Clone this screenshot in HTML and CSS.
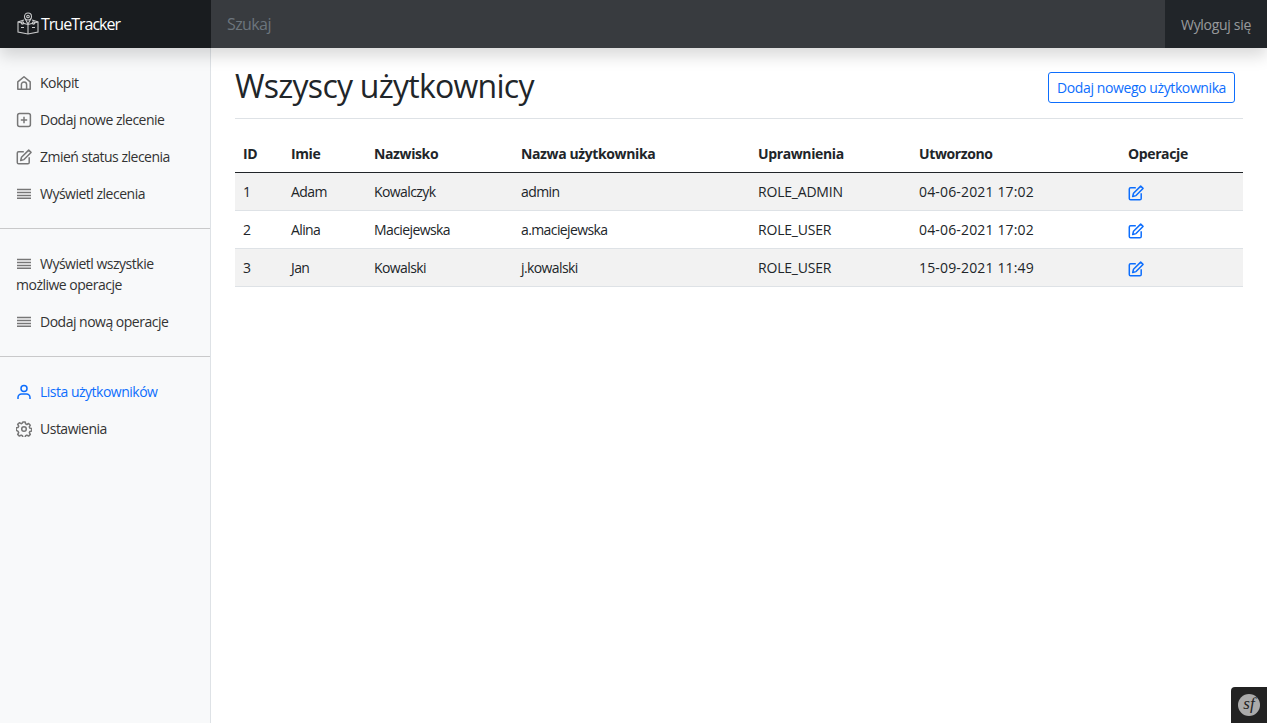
FILE: index.html
```html
<!DOCTYPE html>
<html lang="pl">
<head>
<meta charset="UTF-8">
<title>Wszyscy użytkownicy</title>
<link rel="stylesheet" href="styles.css">
</head>
<body>
<svg class="icon-defs" width="0" height="0">
    <defs>
        <symbol id="i-home" viewBox="0 0 16 16"><path d="M1.800 14.300V6.900L8 1.700l6.200 5.200v7.400z" stroke-linejoin="round"/><path d="M5.400 14.300V9.600a2.600 2.600 0 0 1 5.200 0v4.700"/></symbol>
        <symbol id="i-plus" viewBox="0 0 16 16"><rect x="1.600" y="1.600" width="12.800" height="12.800" rx="2"/><path d="M8 4.800v6.400M4.800 8h6.400"/></symbol>
        <symbol id="i-edit" viewBox="0 0 16 16"><path d="M7.800 2.800H2.600A1.300 1.300 0 0 0 1.300 4.100v9.300a1.300 1.300 0 0 0 1.300 1.300h9.300a1.300 1.300 0 0 0 1.300-1.300V8.200"/><path d="M12.700 1.100 15 3.400 8 10.600l-3.300.9.800-3.300z" stroke-linejoin="round"/></symbol>
        <symbol id="i-list" viewBox="0 0 16 16"><path d="M1 3.600h14M1 6.500h14M1 9.400h14M1 12.300h14"/></symbol>
        <symbol id="i-user" viewBox="0 0 16 16"><circle cx="8" cy="4.400" r="3"/><path d="M2 15v-1.400a3.500 3.500 0 0 1 3.500-3.500h5a3.500 3.500 0 0 1 3.500 3.500V15"/></symbol>
        <symbol id="i-gear" viewBox="0 0 16 16"><circle cx="8" cy="8" r="2.300"/><path d="M6.800 1h2.400l.4 1.900 1.300.6 1.700-1 1.700 1.700-1 1.700.6 1.300 1.900.4v2.400l-1.900.4-.6 1.300 1 1.700-1.700 1.700-1.700-1-1.300.6-.4 1.900H6.800l-.4-1.900-1.300-.6-1.700 1-1.700-1.700 1-1.700-.6-1.300L.2 9.200V6.800l1.900-.4.600-1.300-1-1.700 1.700-1.700 1.700 1 1.300-.6z" stroke-linejoin="round"/></symbol>
    </defs>
</svg>

<header class="navbar">
    <a class="brand" href="#">
        <svg class="brand-logo" viewBox="0 0 23 24">
            <circle cx="11" cy="4.500" r="3.500"/>
            <circle cx="11" cy="4.500" r="1.300"/>
            <path d="M8 6.500 11 12l3-5.500"/>
            <path d="M7 8 1 10v10l10 2 10-2V10l-6-2"/>
            <path d="M11 12.500V22M1 10l10 2.500L21 10"/>
            <circle cx="5.500" cy="11" r="1.200"/>
            <circle cx="16.500" cy="11" r="1.200"/>
            <path d="M4 15.500h3M15 15.500h3"/>
        </svg>
        <span>TrueTracker</span>
    </a>
    <input class="search" type="text" placeholder="Szukaj">
    <a class="logout" href="#">Wyloguj się</a>
</header>

<div class="layout">
    <nav class="sidebar">
        <ul class="side-list">
            <li><a href="#"><svg class="ico"><use href="#i-home"/></svg>Kokpit</a></li>
            <li><a href="#"><svg class="ico"><use href="#i-plus"/></svg>Dodaj nowe zlecenie</a></li>
            <li><a href="#"><svg class="ico"><use href="#i-edit"/></svg>Zmień status zlecenia</a></li>
            <li><a href="#"><svg class="ico"><use href="#i-list"/></svg>Wyświetl zlecenia</a></li>
        </ul>
        <hr class="side-rule">
        <ul class="side-list">
            <li><a href="#"><svg class="ico"><use href="#i-list"/></svg>Wyświetl wszystkie możliwe operacje</a></li>
            <li><a href="#"><svg class="ico"><use href="#i-list"/></svg>Dodaj nową operacje</a></li>
        </ul>
        <hr class="side-rule">
        <ul class="side-list">
            <li><a class="active" href="#"><svg class="ico"><use href="#i-user"/></svg>Lista użytkowników</a></li>
            <li><a href="#"><svg class="ico"><use href="#i-gear"/></svg>Ustawienia</a></li>
        </ul>
    </nav>

    <main class="content">
        <div class="page-head">
            <h2>Wszyscy użytkownicy</h2>
            <a class="btn-add" href="#">Dodaj nowego użytkownika</a>
        </div>
        <table class="users">
            <colgroup>
                <col class="c-id"><col class="c-name"><col class="c-last"><col class="c-login"><col class="c-role"><col class="c-date"><col>
            </colgroup>
            <thead>
                <tr><th>ID</th><th>Imie</th><th>Nazwisko</th><th>Nazwa użytkownika</th><th>Uprawnienia</th><th>Utworzono</th><th>Operacje</th></tr>
            </thead>
            <tbody>
                <tr><td>1</td><td>Adam</td><td>Kowalczyk</td><td>admin</td><td class="role">ROLE_ADMIN</td><td class="date">04-06-2021 17:02</td><td><a class="op" href="#"><svg class="ico"><use href="#i-edit"/></svg></a></td></tr>
                <tr><td>2</td><td>Alina</td><td>Maciejewska</td><td>a.maciejewska</td><td class="role">ROLE_USER</td><td class="date">04-06-2021 17:02</td><td><a class="op" href="#"><svg class="ico"><use href="#i-edit"/></svg></a></td></tr>
                <tr><td>3</td><td>Jan</td><td>Kowalski</td><td>j.kowalski</td><td class="role">ROLE_USER</td><td class="date">15-09-2021 11:49</td><td><a class="op" href="#"><svg class="ico"><use href="#i-edit"/></svg></a></td></tr>
            </tbody>
        </table>
    </main>
</div>

<div class="sf-toolbar"><span class="sf-badge">sf</span></div>
</body>
</html>
```

FILE: styles.css
```css
* {
    box-sizing: border-box;
}
html, body {
    height: 100%;
}
body {
    margin: 0;
    background-color: #fff;
    color: #212529;
    font-family: "Open Sans", "Noto Sans", sans-serif;
    font-size: 14px;
    overflow: hidden;
}
a {
    text-decoration: none;
}
.icon-defs {
    position: absolute;
}
.navbar {
    position: relative;
    z-index: 2;
    display: flex;
    height: 48px;
    background-color: #212529;
    box-shadow: 0 8px 16px rgba(0,0,0,0.15);
}
.brand {
    display: flex;
    align-items: center;
    width: 211px;
    padding-left: 17px;
    background-color: #191c1f;
    color: #fff;
    font-size: 16px;
    letter-spacing: -1px;
}
.brand-logo {
    width: 23px;
    height: 24px;
    margin-right: 1px;
    fill: none;
    stroke: #c9cacb;
    stroke-width: 1.100;
}
.search {
    flex: 1;
    padding: 0 16px;
    border: none;
    outline: none;
    background-color: #383b3f;
    color: #fff;
    font-family: inherit;
    font-size: 16px;
    letter-spacing: -0.6px;
}
.search::placeholder {
    color: #6c757d;
}
.logout {
    display: flex;
    align-items: center;
    width: 102px;
    padding: 0 16px;
    color: rgba(255,255,255,0.55);
    letter-spacing: -0.3px;
    white-space: nowrap;
}
.layout {
    display: flex;
    height: calc(100% - 48px);
}
.sidebar {
    flex: 0 0 211px;
    padding-top: 16px;
    border-right: 1px solid #dee2e6;
    background-color: #f8f9fa;
}
.side-list {
    margin: 0;
    padding: 0;
    list-style: none;
}
.side-list a {
    display: block;
    padding: 8px 16px;
    color: #333;
    line-height: 21px;
    letter-spacing: -0.5px;
}
.side-list a.active {
    color: #0d6efd;
}
.ico {
    width: 16px;
    height: 16px;
    margin-right: 8px;
    vertical-align: -3px;
    fill: none;
    stroke: #777;
    stroke-width: 1.500;
}
.active .ico {
    stroke: #0d6efd;
}
.side-rule {
    height: 1px;
    margin: 16px 0;
    border: none;
    background-color: #c9c9ca;
}
.content {
    flex: 1;
    padding: 0 24px;
}
.page-head {
    display: flex;
    justify-content: space-between;
    align-items: center;
    height: 71px;
    margin-bottom: 16px;
    padding: 16px 8px 8px 0;
    border-bottom: 1px solid #dee2e6;
}
.page-head h2 {
    margin: 0 0 4px;
    font-size: 32px;
    font-weight: 400;
    letter-spacing: -0.74px;
}
.btn-add {
    padding: 4px 8px;
    border: 1px solid #0d6efd;
    border-radius: 3px;
    color: #0d6efd;
    line-height: 21px;
    letter-spacing: -0.4px;
}
.users {
    width: 100%;
    border-collapse: collapse;
    table-layout: fixed;
}
.c-id { width: 48px; }
.c-name { width: 83px; }
.c-last { width: 147px; }
.c-login { width: 237px; }
.c-role { width: 161px; }
.c-date { width: 209px; }
.users th, .users td {
    padding: 8px;
    text-align: left;
    line-height: 21px;
    letter-spacing: -0.6px;
    border-bottom: 1px solid #dee2e6;
}
.users th {
    font-weight: 700;
    letter-spacing: -0.38px;
    border-bottom: 1px solid #212529;
}
.users td.role {
    letter-spacing: -0.2px;
}
.users td.date {
    letter-spacing: 0.16px;
}
.users tbody tr:nth-child(odd) {
    background-color: #f2f2f2;
}
.op {
    display: block;
    height: 21px;
    padding-top: 4px;
}
.op .ico {
    display: block;
    margin: 0;
    stroke: #0d6efd;
}
.sf-toolbar {
    position: fixed;
    right: 0;
    bottom: 0;
    display: flex;
    align-items: center;
    justify-content: center;
    width: 36px;
    height: 36px;
    border-top-left-radius: 4px;
    background-color: #222;
}
.sf-badge {
    width: 22px;
    height: 22px;
    border-radius: 50%;
    background-color: #aaa;
    color: #222;
    font-family: "Liberation Serif", serif;
    font-size: 17px;
    font-style: italic;
    line-height: 20px;
    text-align: center;
}
```
